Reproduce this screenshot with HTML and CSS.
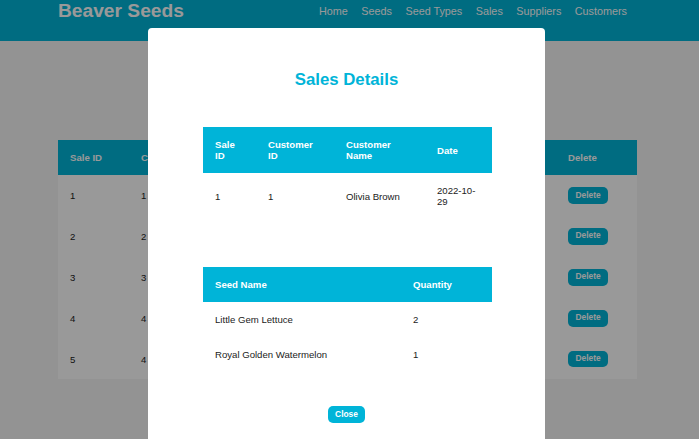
FILE: index.html
```html
<!DOCTYPE html>
<html lang="en">
<head>
<meta charset="utf-8">
<title>Beaver Seeds - Sales</title>
<link rel="stylesheet" href="styles.css">
</head>
<body>
<header class="topbar">
  <div class="topbar-inner">
    <h1 class="brand">Beaver Seeds</h1>
    <nav class="nav">
      <a href="#">Home</a>
      <a href="#">Seeds</a>
      <a href="#">Seed Types</a>
      <a href="#">Sales</a>
      <a href="#">Suppliers</a>
      <a href="#">Customers</a>
    </nav>
  </div>
</header>

<main class="content" aria-hidden="true">
  <table class="sales-table">
    <colgroup>
      <col class="c-id"><col class="c-cust"><col class="c-name"><col class="c-date"><col class="c-det"><col class="c-del">
    </colgroup>
    <thead>
      <tr><th>Sale ID</th><th>Customer ID</th><th class="under"></th><th class="under"></th><th class="under"></th><th>Delete</th></tr>
    </thead>
    <tbody>
      <tr><td>1</td><td>1</td><td class="under"></td><td class="under"></td><td class="under"></td><td><button class="btn">Delete</button></td></tr>
      <tr><td>2</td><td>2</td><td class="under"></td><td class="under"></td><td class="under"></td><td><button class="btn">Delete</button></td></tr>
      <tr><td>3</td><td>3</td><td class="under"></td><td class="under"></td><td class="under"></td><td><button class="btn">Delete</button></td></tr>
      <tr><td>4</td><td>4</td><td class="under"></td><td class="under"></td><td class="under"></td><td><button class="btn">Delete</button></td></tr>
      <tr><td>5</td><td>4</td><td class="under"></td><td class="under"></td><td class="under"></td><td><button class="btn">Delete</button></td></tr>
    </tbody>
  </table>
</main>

<div class="overlay">
  <div class="modal">
    <h2 class="modal-title">Sales Details</h2>
    <table class="detail-table info-table">
      <colgroup><col class="i-id"><col class="i-cust"><col class="i-name"><col class="i-date"></colgroup>
      <thead>
        <tr><th>Sale ID</th><th>Customer ID</th><th>Customer Name</th><th>Date</th></tr>
      </thead>
      <tbody>
        <tr><td>1</td><td>1</td><td>Olivia Brown</td><td>2022-10-29</td></tr>
      </tbody>
    </table>
    <table class="detail-table items-table">
      <colgroup><col class="s-name"><col class="s-qty"></colgroup>
      <thead>
        <tr><th>Seed Name</th><th>Quantity</th></tr>
      </thead>
      <tbody>
        <tr><td>Little Gem Lettuce</td><td>2</td></tr>
        <tr><td>Royal Golden Watermelon</td><td>1</td></tr>
      </tbody>
    </table>
    <div class="modal-actions">
      <button class="btn">Close</button>
    </div>
  </div>
</div>
</body>
</html>
```

FILE: styles.css
```css
html, body {
  margin: 0;
  padding: 0;
}
body {
  background: #f5f5f5;
  font-family: "Liberation Sans", Arial, Helvetica, sans-serif;
  font-size: 9.6px;
  color: #222;
  height: 439px;
  overflow: hidden;
}

.topbar {
  background: #00b4d8;
  height: 41px;
}
.topbar-inner {
  width: 569px;
  margin-left: 58px;
  padding-right: 10px;
  display: flex;
  justify-content: space-between;
  align-items: flex-start;
}
.brand {
  margin: 0;
  font-size: 19.2px;
  line-height: 21px;
  font-weight: bold;
  color: #fff;
}
.nav {
  display: flex;
  gap: 13.5px;
  padding-top: 5px;
}
.nav a {
  color: #fff;
  text-decoration: none;
  font-size: 10.8px;
  line-height: 12px;
}

.content {
  padding-top: 99px;
  padding-left: 58px;
}
.sales-table {
  width: 579px;
  table-layout: fixed;
  border-collapse: collapse;
  background: #fff;
}
.c-id { width: 71px; }
.c-cust { width: 100px; }
.c-name { width: 130px; }
.c-date { width: 100px; }
.c-det { width: 97px; }
.c-del { width: 81px; }

.sales-table th,
.sales-table td,
.detail-table th,
.detail-table td {
  padding: 12px;
  text-align: left;
  line-height: 11px;
  vertical-align: middle;
}
.sales-table th,
.detail-table th {
  background: #00b4d8;
  color: #fff;
  font-weight: bold;
}

.btn {
  display: inline-block;
  background: #00b4d8;
  color: #fff;
  border: none;
  border-radius: 5px;
  font-family: "Liberation Sans", Arial, Helvetica, sans-serif;
  font-weight: bold;
  font-size: 8.4px;
  line-height: 9.7px;
  padding: 3.6px 7.5px;
  margin: 0;
}
.sales-table .btn {
  display: block;
}

.overlay {
  position: fixed;
  inset: 0;
  background: rgba(0, 0, 0, 0.4);
  padding-top: 28px;
  padding-left: 148px;
}
.modal {
  width: 397px;
  background: #fff;
  border-radius: 4px;
  padding-top: 42px;
  padding-bottom: 30px;
}
.modal-title {
  margin: 0;
  text-align: center;
  color: #00b4d8;
  font-size: 16.8px;
  line-height: 20px;
  font-weight: bold;
}
.detail-table {
  width: 289px;
  margin-left: 55px;
  table-layout: fixed;
  border-collapse: collapse;
}
.info-table { margin-top: 37px; }
.items-table { margin-top: 48px; }
.i-id { width: 53px; }
.i-cust { width: 78px; }
.i-name { width: 91px; }
.i-date { width: 67px; }
.s-name { width: 198px; }
.s-qty { width: 91px; }

.modal-actions {
  margin-top: 34px;
  display: flex;
  justify-content: center;
}
```
